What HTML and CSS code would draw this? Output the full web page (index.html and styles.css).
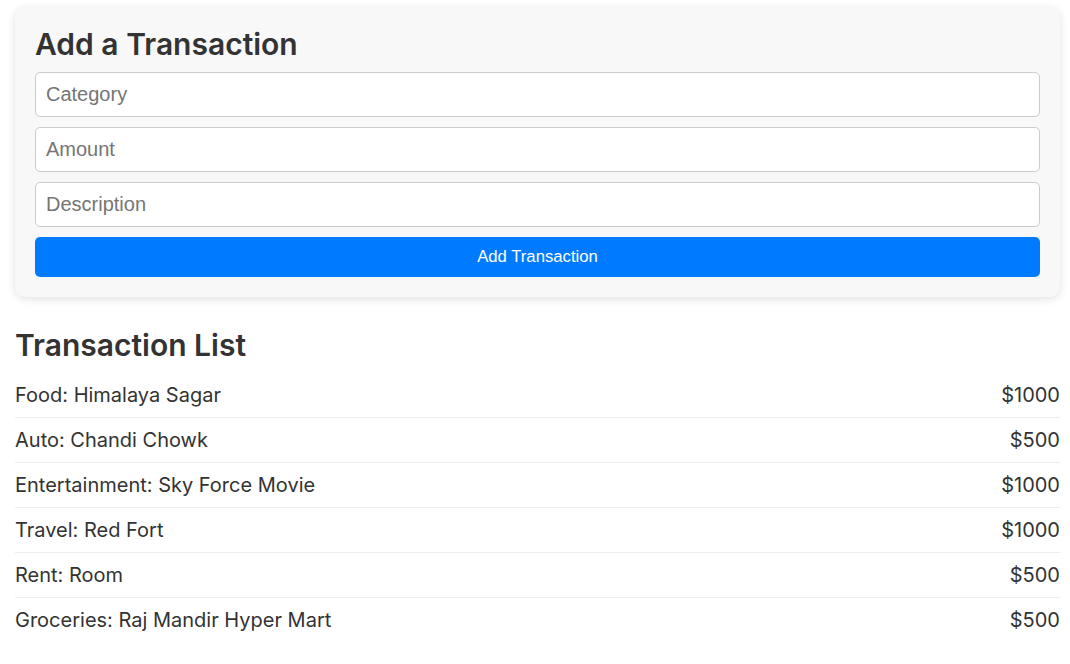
FILE: index.html
```html
<!DOCTYPE html>
<html lang="en">
<head>
<meta charset="utf-8">
<title>Expense Tracker</title>
<link rel="stylesheet" href="styles.css">
</head>
<body>
<div class="app">
  <section class="card">
    <h2 class="card-title">Add a Transaction</h2>
    <form class="form">
      <input class="field" type="text" placeholder="Category">
      <input class="field" type="text" placeholder="Amount">
      <input class="field" type="text" placeholder="Description">
      <button class="btn" type="button">Add Transaction</button>
    </form>
  </section>
  <section class="list-section">
    <h2 class="list-title">Transaction List</h2>
    <ul class="list">
      <li class="row"><span>Food: Himalaya Sagar</span><span>$1000</span></li>
      <li class="row"><span>Auto: Chandi Chowk</span><span>$500</span></li>
      <li class="row"><span>Entertainment: Sky Force Movie</span><span>$1000</span></li>
      <li class="row"><span>Travel: Red Fort</span><span>$1000</span></li>
      <li class="row"><span>Rent: Room</span><span>$500</span></li>
      <li class="row"><span>Groceries: Raj Mandir Hyper Mart</span><span>$500</span></li>
    </ul>
  </section>
</div>
</body>
</html>
```

FILE: styles.css
```css
* { box-sizing: border-box; }
html, body { margin: 0; background: #fff; }
body {
  font-family: Inter, "Noto Sans", sans-serif;
  color: #333;
}
.app {
  padding: 7px 10px 0 15px;
}
.card {
  background: #f8f8f8;
  border-radius: 10px;
  box-shadow: 0 2px 8px rgba(0,0,0,0.12);
  padding: 20px;
}
.card-title {
  margin: 0 0 11px;
  font-size: 30px;
  font-weight: 600;
  line-height: 34px;
  color: #333;
}
.form {
  display: flex;
  flex-direction: column;
  gap: 10px;
}
.field {
  display: block;
  width: 100%;
  height: 45px;
  padding: 0 10px;
  font-family: "Liberation Sans", Arial, sans-serif;
  font-size: 20px;
  color: #333;
  background: #fff;
  border: 1px solid #ccc;
  border-radius: 5px;
  outline: none;
}
.field::placeholder { color: #757575; }
.btn {
  height: 40px;
  width: 100%;
  border: none;
  border-radius: 5px;
  background: #007bff;
  color: #fff;
  font-family: "Liberation Sans", Arial, sans-serif;
  font-size: 16.7px;
  cursor: pointer;
}
.list-section {
  padding-top: 30px;
}
.list-title {
  margin: 0 0 10px;
  font-size: 30px;
  font-weight: 600;
  line-height: 36px;
  color: #333;
}
.list {
  list-style: none;
  margin: 0;
  padding: 0;
}
.row {
  display: flex;
  justify-content: space-between;
  font-size: 20px;
  line-height: 24px;
  padding: 10px 0;
  border-bottom: 1px solid #eee;
}
.row:last-child { border-bottom: none; }
```
